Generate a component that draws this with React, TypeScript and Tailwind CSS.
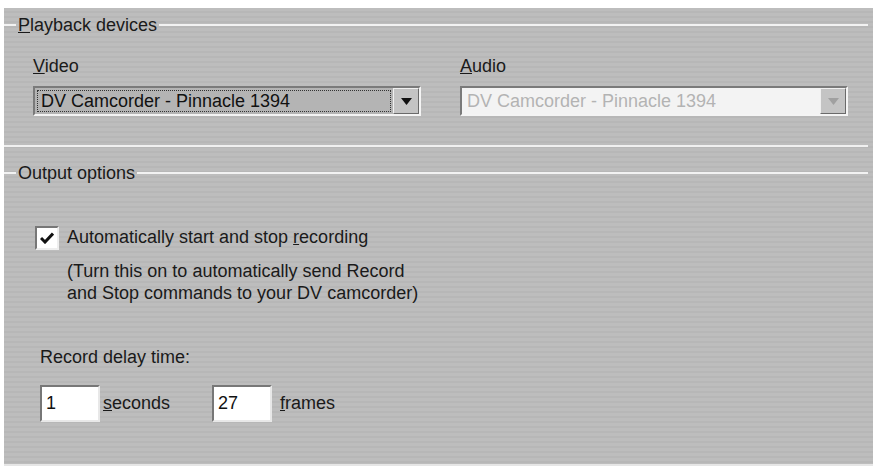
import React from 'react';

const font = { fontFamily: '"Liberation Sans", Arial, sans-serif' };

function GroupHeader({ label, underline }: { label: string; underline?: number }) {
    return (
        <div className="flex items-center h-[20px]">
            <div className="w-[12px] h-[2px] bg-[#f2f2f2]" />
            <span className="px-[2px] text-[18px] leading-[20px] text-[#1a1a1a]">
                {underline === 0 ? <><u>{label[0]}</u>{label.slice(1)}</> : label}
            </span>
            <div className="flex-1 h-[2px] bg-[#f2f2f2]" />
        </div>
    );
}

function Combo({ text, disabled }: { text: string; disabled?: boolean }) {
    return (
        <div className={`flex h-[30px] border-2 border-t-[#7a7a7a] border-l-[#7a7a7a] border-b-[#f4f4f4] border-r-[#f4f4f4] ${disabled ? 'bg-[#f3f3f3]' : 'bg-[#b4b4b4]'}`}>
            <div className="flex-1 flex items-center p-[2px]">
                <div className={`flex-1 h-full flex items-center px-[3px] text-[18px] ${disabled ? 'text-[#b3b3b3]' : 'text-[#111] border border-dotted border-[#333]'}`}>
                    {text}
                </div>
            </div>
            <div className="w-[26px] flex items-center justify-center bg-[#c4c4c4] border border-t-[#f0f0f0] border-l-[#f0f0f0] border-b-[#6a6a6a] border-r-[#6a6a6a]">
                <svg width="11" height="7" viewBox="0 0 11 7">
                    <path d="M0 0 H11 L5.5 7 Z" fill={disabled ? '#a0a0a0' : '#111'} />
                </svg>
            </div>
        </div>
    );
}

function NumBox({ value }: { value: string }) {
    return (
        <div className="w-[60px] h-[37px] bg-white border-2 border-t-[#777] border-l-[#777] border-b-[#e8e8e8] border-r-[#e8e8e8] px-[4px] flex items-center text-[18px] text-[#111]">
            {value}
        </div>
    );
}

export default function App() {
    return (
        <div style={font} className="w-[873px] h-[468px] bg-white pt-[8px] pl-[4px] overflow-hidden">
            <div className="h-[458px] bg-[#bcbcbc] bg-[repeating-linear-gradient(180deg,#bdbdbd_0px,#bdbdbd_3px,#b7b7b7_3px,#b7b7b7_5px)] flex flex-col pr-[5px] border-b-2 border-[#e6e6e6]">
                <div className="pt-[7px]">
                    <GroupHeader label="Playback devices" underline={0} />
                </div>
                <div className="flex pl-[29px] pt-[21px] gap-[39px] pr-[20px]">
                    <div className="w-[388px] flex flex-col gap-[10px]">
                        <div className="text-[18px] leading-[20px] text-[#1a1a1a]"><u>V</u>ideo</div>
                        <Combo text="DV Camcorder - Pinnacle 1394" />
                    </div>
                    <div className="flex-1 flex flex-col gap-[10px]">
                        <div className="text-[18px] leading-[20px] text-[#1a1a1a]"><u>A</u>udio</div>
                        <Combo text="DV Camcorder - Pinnacle 1394" disabled />
                    </div>
                </div>
                <div className="mt-[29px] h-[2px] bg-[#f0f0f0]" />
                <div className="pt-[16px]">
                    <GroupHeader label="Output options" />
                </div>
                <div className="pl-[31px] pt-[41px] flex items-center gap-[8px]">
                    <div className="w-[24px] h-[24px] bg-white border-2 border-t-[#777] border-l-[#777] border-b-[#eee] border-r-[#eee] flex items-center justify-center">
                        <svg width="14" height="12" viewBox="0 0 14 12">
                            <path d="M1 6 L5 10 L13 1.5" stroke="#111" strokeWidth="3" fill="none" />
                        </svg>
                    </div>
                    <span className="text-[18px] text-[#1a1a1a]">Automatically start and stop <u>r</u>ecording</span>
                </div>
                <div className="pl-[63px] pt-[9px] text-[18px] leading-[22px] text-[#1a1a1a]">
                    <div>(Turn this on to automatically send Record</div>
                    <div>and Stop commands to your DV camcorder)</div>
                </div>
                <div className="pl-[36px] pt-[42px] text-[18px] leading-[22px] text-[#1a1a1a]">Record delay time:</div>
                <div className="pl-[36px] pt-[17px] flex items-center text-[18px] text-[#1a1a1a]">
                    <NumBox value="1" />
                    <span className="ml-[3px] w-[109px]"><u>s</u>econds</span>
                    <NumBox value="27" />
                    <span className="ml-[8px]"><u>f</u>rames</span>
                </div>
            </div>
        </div>
    );
}
